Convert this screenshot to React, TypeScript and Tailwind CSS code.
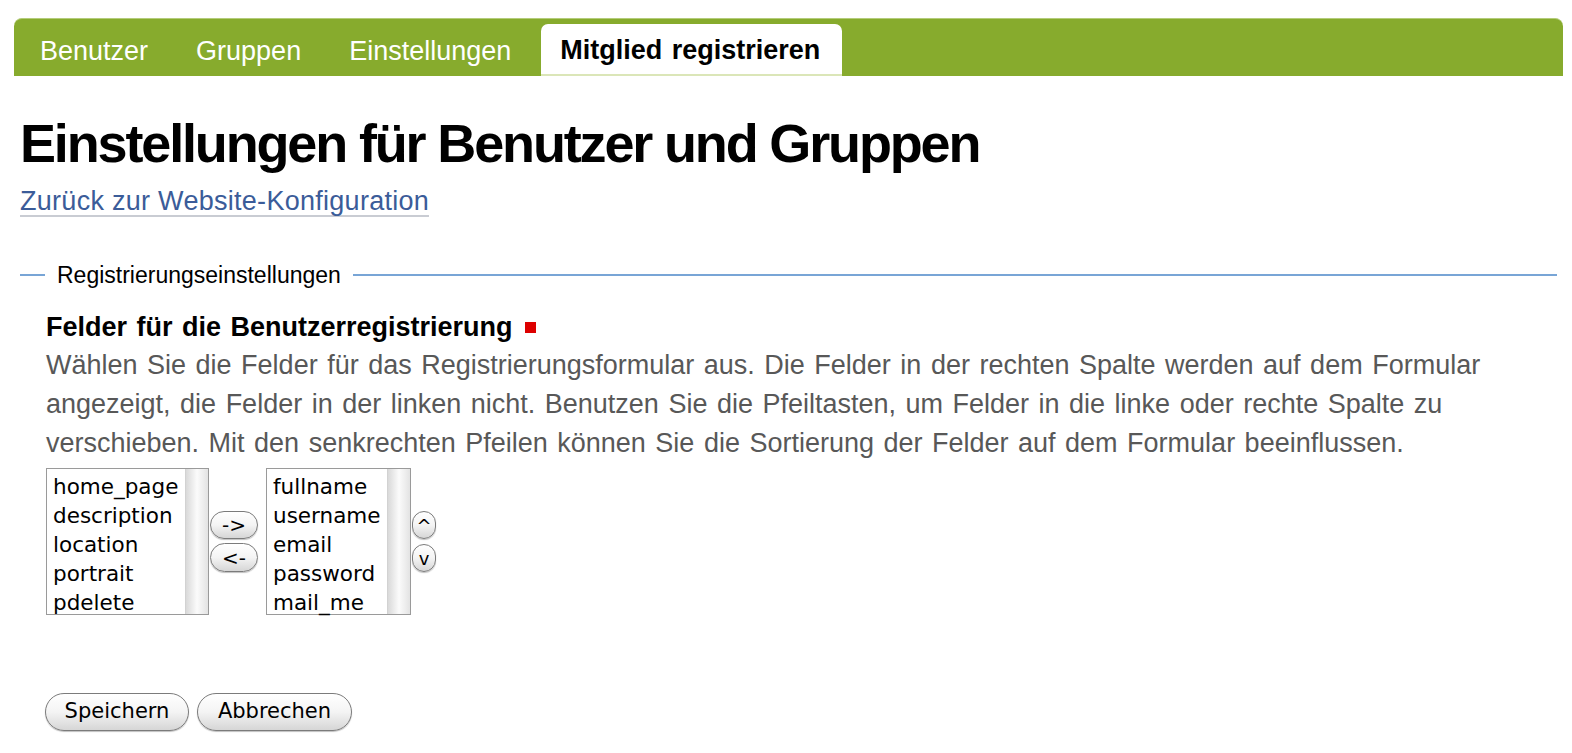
const tabs = ["Benutzer", "Gruppen", "Einstellungen"];
const hidden = ["home_page", "description", "location", "portrait", "pdelete"];
const shown = ["fullname", "username", "email", "password", "mail_me"];

const aqua =
  "rounded-full border border-[#7b7b7b] bg-gradient-to-b from-white via-[#f4f4f4] to-[#d6d6d6] shadow-[0_1px_1px_rgba(0,0,0,0.25)] text-black flex items-center justify-center font-['DejaVu_Sans',sans-serif]";

function ListBox({ items, width }: { items: string[]; width: string }) {
  return (
    <div className={`flex h-[147px] border border-[#9a9a9a] bg-white ${width}`}>
      <div className="flex-1 pl-[6px] pt-[3px] font-['DejaVu_Sans',sans-serif] text-[21.5px] leading-[29px] text-black">
        {items.map((it) => (
          <div key={it}>{it}</div>
        ))}
      </div>
      <div className="w-[23px] border-l border-[#d2d2d2] bg-gradient-to-r from-[#d9d9d9] via-[#fbfbfb] to-[#e3e3e3]" />
    </div>
  );
}

export default function App() {
  return (
    <div className="min-h-screen bg-white font-['Liberation_Sans',Arial,sans-serif] pt-[18px]">
      <div className="ml-[14px] mr-[9px] h-[58px] rounded-t-[8px] border-t border-[#b4cc7a] bg-[#87ab2d] pl-[2px] flex items-end">
        {tabs.map((t) => (
          <div key={t} className="h-[52px] px-6 pt-[2px] flex items-center text-[27px] text-white">
            {t}
          </div>
        ))}
        <div className="ml-[6px] h-[52px] pl-[19px] pr-[22px] pt-[2px] flex items-center rounded-t-[7px] bg-white border-b-2 border-[#dbe6b8] text-[27px] font-bold text-black [word-spacing:2px]">
          Mitglied registrieren
        </div>
      </div>

      <div className="pl-[20px] pr-[15px]">
        <h1 className="mt-[40px] text-[54px] leading-[54px] font-bold tracking-[-2.15px] text-black">
          Einstellungen für Benutzer und Gruppen
        </h1>
        <a
          href="#"
          className="mt-[17px] inline-block border-b-2 border-[#c9ccd3] text-[27px] leading-[28px] tracking-[0.28px] text-[#3b5c99]"
        >
          Zurück zur Website-Konfiguration
        </a>

        <div className="mt-[45px] flex h-[26px] items-center">
          <div className="h-[2px] w-[25px] bg-[#78a5d6]" />
          <span className="px-[12px] text-[23px] text-black">Registrierungseinstellungen</span>
          <div className="h-[2px] flex-1 bg-[#78a5d6]" />
        </div>

        <div className="pl-[26px]">
          <div className="mt-[22px] flex items-center text-[27px] leading-[34px] font-bold text-black [word-spacing:2px]">
            Felder für die Benutzerregistrierung
            <span className="ml-[12px] inline-block h-[11px] w-[11px] bg-[#dd0000]" />
          </div>
          <p className="mt-[2px] text-[27px] leading-[39px] text-[#585858] [word-spacing:2px]">
            Wählen Sie die Felder für das Registrierungsformular aus. Die Felder in der rechten Spalte werden auf dem Formular
            <br />
            angezeigt, die Felder in der linken nicht. Benutzen Sie die Pfeiltasten, um Felder in die linke oder rechte Spalte zu
            <br />
            verschieben. Mit den senkrechten Pfeilen können Sie die Sortierung der Felder auf dem Formular beeinflussen.
          </p>

          <div className="mt-[5px] flex">
            <ListBox items={hidden} width="w-[163px]" />
            <div className="ml-[1px] mr-[8px] flex flex-col justify-center gap-[4px]">
              <button className={`${aqua} h-[28px] w-[48px] text-[20px]`}>-&gt;</button>
              <button className={`${aqua} h-[29px] w-[48px] text-[20px]`}>&lt;-</button>
            </div>
            <ListBox items={shown} width="w-[145px]" />
            <div className="ml-[1px] flex flex-col justify-center gap-[5px]">
              <button className={`${aqua} h-[28px] w-[24px] text-[18px]`}>^</button>
              <button className={`${aqua} h-[28px] w-[24px] text-[18px]`}>v</button>
            </div>
          </div>

          <div className="mt-[78px] flex gap-[8px] -ml-[1px]">
            <button className={`${aqua} h-[38px] w-[144px] text-[21px]`}>Speichern</button>
            <button className={`${aqua} h-[38px] w-[155px] text-[21px]`}>Abbrechen</button>
          </div>
        </div>
      </div>
    </div>
  );
}
